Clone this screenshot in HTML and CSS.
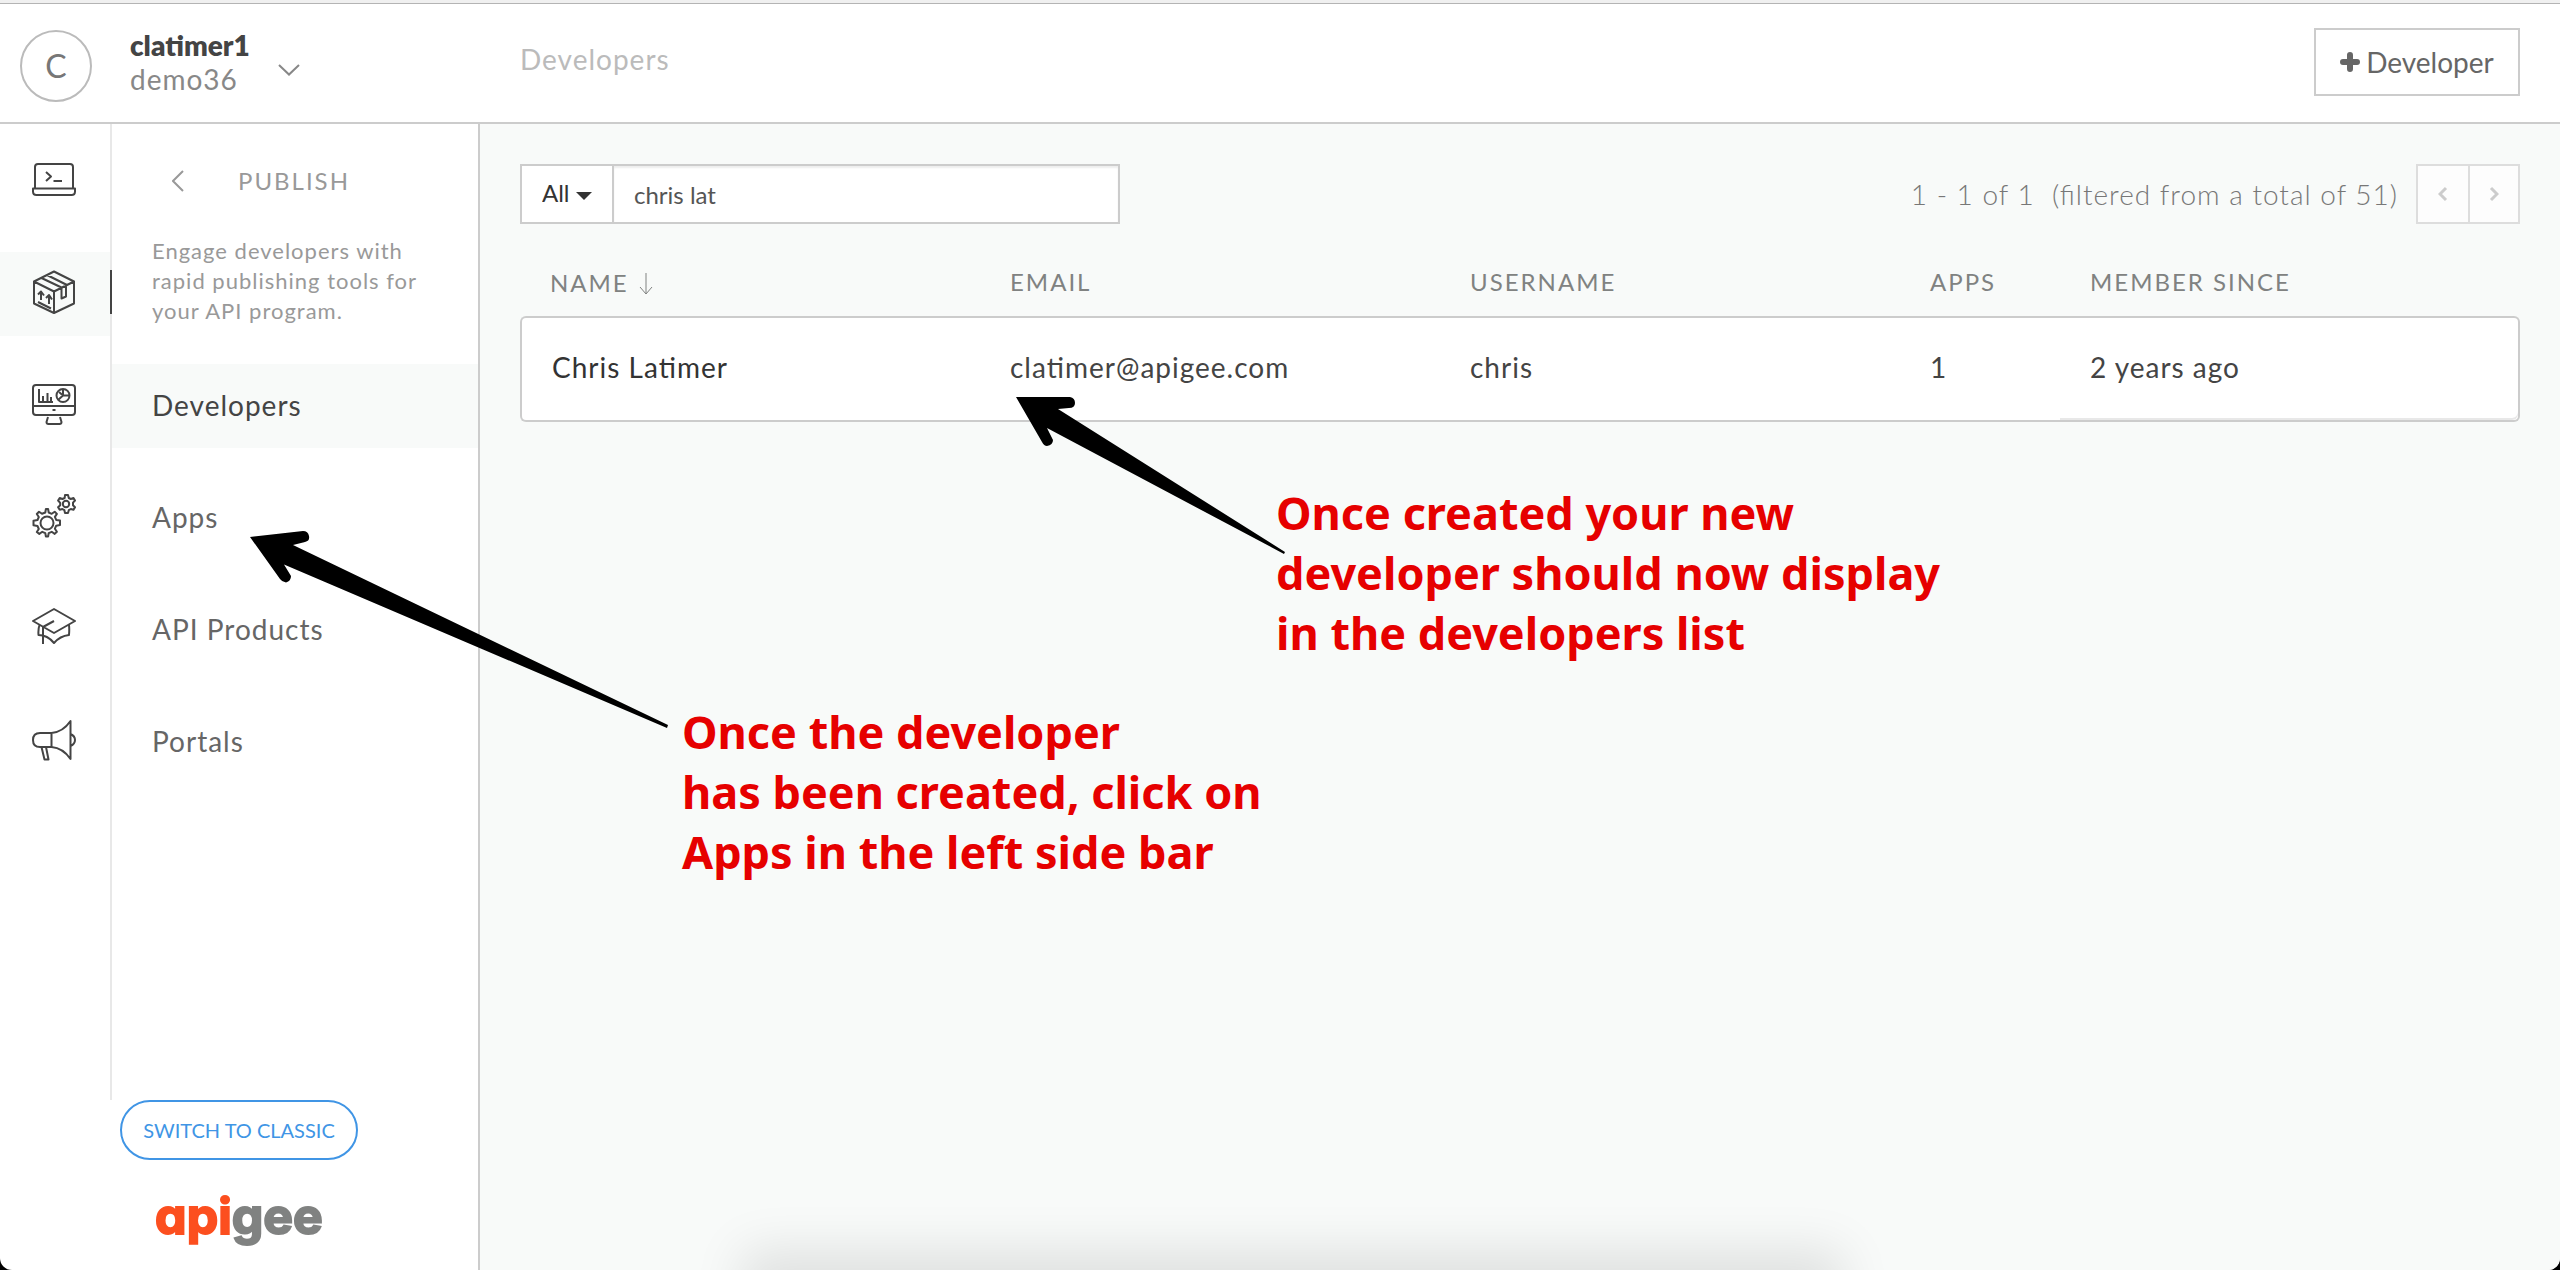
FILE: index.html
```html
<!DOCTYPE html>
<html lang="en">
<head>
<meta charset="utf-8">
<meta name="viewport" content="width=device-width, initial-scale=1">
<title>Developers - apigee</title>
<link rel="stylesheet" href="styles.css">
</head>
<body>
<div class="app">
  <header class="topbar">
    <button class="account" type="button">
      <span class="avatar">C</span>
      <span class="account-names"><strong>clatimer1</strong><span>demo36</span></span>
      <svg class="chevron-down" viewBox="0 0 22 12" width="22" height="12"><path d="M1 1l10 9.500L21 1"/></svg>
    </button>
    <h1 class="page-title tracked">Developers</h1>
    <button class="add-button" type="button">
      <svg viewBox="0 0 20 20" width="20" height="20"><path d="M10 3v14M3 10h14"/></svg>Developer
    </button>
  </header>

  <div class="body">
    <aside class="sidebar">
      <div class="navs">
        <nav class="rail" aria-label="Sections">
          <a href="#" aria-label="Develop">
            <svg viewBox="0 0 44 44"><path d="M3 30V9q0-3 3-3h32q3 0 3 3v21M1 30.500h42v3q0 3.500-3.500 3.500h-35Q1 37 1 33.500zM14 14l5 4.500-5 4.500M21.500 23H30"/></svg>
          </a>
          <a href="#" class="current" aria-label="Publish">
            <svg viewBox="0 0 44 44"><path d="M22 1.500L42 11.500v22L22 43 2 33.500v-22zM2 11.500l20 10 20-10M22 21.500V43M15 5l20 10M9.500 8l20 9.500M29.500 18v10.500l4.500-2V15.500M9 30V21.500M6 24.500l3-3 3 4M17 34V25.500M14 28l3-3 3 4.500M6 32l13 6.500"/></svg>
          </a>
          <a href="#" aria-label="Analyze">
            <svg viewBox="0 0 44 44"><path d="M4 3h36q3 0 3 3v24q0 3-3 3H4q-3 0-3-3V6q0-3 3-3zM1 24h42M20.500 28h3M7 7v13h14M11 19v-5M15.500 19v-8M19 19v-4M16 35l-1.500 5q0 2 2 2h11q2 0 2-2L28 35M31 7v6.500l-5 4.500M31 13.500h6.500M31 13.500l-4-3.500"/><circle cx="31" cy="13.500" r="6.500"/></svg>
          </a>
          <a href="#" aria-label="Admin">
            <svg viewBox="0 0 44 44"><path d="M13.300 18.500l.6-3.500h2.200l.6 3.500 3 1.300 3-2.100 2.200 2.200-2 3 1.300 3 3.800.7v4.500l-3.800.6-1.300 3 2 3-2.200 2.200-3-2.100-3 1.300-.6 3.400h-2.200l-.6-3.400-3-1.300-3 2.100L4.800 38l2-3-1.300-3L1.500 31.300v-4.500l4-.8 1.300-3-2-3L7 17.700l3 2.100z"/><circle cx="15" cy="29" r="6.500"/><path d="M32.700 4l.3-3h3l.8 3 2 1 2.700-1 1.500 2.500-2 2.200v2.500l2 2-1.500 2.600-2.700-.8-2 1.200-.8 2.800h-3l-.6-2.800-2-1.200-2.700.8-1.600-2.500 2.100-2.100V8.800l-2.100-2.300L27.700 4l2.700 1z"/><circle cx="34" cy="10" r="3.200"/></svg>
          </a>
          <a href="#" aria-label="Learn">
            <svg viewBox="0 0 44 44"><path d="M22 3l21 12-21 12L1 15zM22 15l-11 6v17M7.500 19q-1.500 4-1 10 9 0 15.500 8 6-7 15-8 .5-6 0-10"/></svg>
          </a>
          <a href="#" aria-label="News">
            <svg viewBox="0 0 44 44"><path d="M19.500 15H8q-7 0-7 7t7 7h11.500zM19.500 15Q31 14 38.500 3v38Q31 30 19.500 29M38.500 16q4.500 2 4.500 6t-4.500 6M9.500 29l3 12.500h4L14 29"/></svg>
          </a>
        </nav>
        <nav class="panel" aria-label="Publish">
          <div class="panel-head">
            <button class="back" type="button" aria-label="Back"><svg viewBox="0 0 12 22" width="12" height="22"><path d="M11 1L1 11l10 10"/></svg></button>
            <h2>PUBLISH</h2>
          </div>
          <p class="intro">Engage developers with rapid publishing tools for your API program.</p>
          <ul class="tracked">
            <li><a href="#" class="current">Developers</a></li>
            <li><a href="#">Apps</a></li>
            <li><a href="#">API Products</a></li>
            <li><a href="#">Portals</a></li>
          </ul>
        </nav>
      </div>
      <footer class="side-foot">
        <button class="switch" type="button">SWITCH TO CLASSIC</button>
        <a class="logo" href="#"><span>api</span>gee</a>
      </footer>
    </aside>

    <main class="content">
      <div class="toolbar">
        <form class="search">
          <span class="scope">
            <select aria-label="Search field"><option>All</option></select>
            <svg viewBox="0 0 16 8" width="16" height="8"><path d="M0 0h16L8 8z"/></svg>
          </span>
          <input type="text" aria-label="Search developers" value="chris lat">
        </form>
        <div class="paging">
          <span class="count">1 - 1 of 1&nbsp; (filtered from a total of 51)</span>
          <div class="pager">
            <button type="button" aria-label="Previous page"><svg viewBox="0 0 10 16" width="10" height="16"><path d="M8 2L2 8l6 6"/></svg></button>
            <button type="button" aria-label="Next page"><svg viewBox="0 0 10 16" width="10" height="16"><path d="M2 2l6 6-6 6"/></svg></button>
          </div>
        </div>
      </div>

      <table class="developers">
        <thead>
          <tr>
            <th class="wide">NAME <svg viewBox="0 0 14 22" width="14" height="22"><path d="M7 0v21M1 14l6 7 6-7"/></svg></th>
            <th class="wide">EMAIL</th>
            <th class="wide">USERNAME</th>
            <th class="narrow">APPS</th>
            <th>MEMBER SINCE</th>
          </tr>
        </thead>
        <tbody class="tracked">
          <tr>
            <td class="name">Chris Latimer</td>
            <td>clatimer@apigee.com</td>
            <td>chris</td>
            <td>1</td>
            <td>2 years ago</td>
          </tr>
        </tbody>
      </table>
    </main>
  </div>

  <div class="window-shadow"></div>

  <svg class="arrow arrow-apps" viewBox="250 530 420 200" width="420" height="200"><path d="M250 537L303 531Q308 531 309 536T305 542L293 545 668 725 667 728 284 564.500 291 576Q291 581 286 582.500 282 582 280 579z"/></svg>
  <p class="note note-apps">Once the developer<br>has been created, click on<br>Apps in the left side bar</p>
  <svg class="arrow arrow-list" viewBox="1016 396 270 160" width="270" height="160"><path d="M1016 397H1070Q1075 398 1075 403T1069 408L1058 409 1285 552 1284 554 1047 428 1053 440Q1053 445 1047 446 1044 446 1042 442z"/></svg>
  <p class="note note-list">Once created your new<br>developer should now display<br>in the developers list</p>
</div>
</body>
</html>
```

FILE: styles.css
```css
* {
  box-sizing: border-box;
}

html {
  background: #000;
}

body {
  margin: 0;
  font: 28px/34px Lato, "Open Sans", sans-serif;
  color: #444;
}

button,
input,
select {
  font: inherit;
  color: inherit;
}

button {
  padding: 0;
  border: 0;
  background: none;
  cursor: pointer;
}

h1, h2, p, ul {
  margin: 0;
  padding: 0;
  font-weight: 400;
}

a {
  color: inherit;
  text-decoration: none;
}

svg {
  fill: none;
  stroke: currentColor;
  stroke-width: 2;
}

.tracked {
  letter-spacing: 1px;
  font-feature-settings: "liga" 1;
}

.app {
  position: relative;
  display: flex;
  flex-direction: column;
  min-height: 100vh;
  overflow: hidden;
  border-top: 3px solid #f0f0f0;
  border-radius: 0 0 12px 12px;
  background: #fff;
}

/* Top bar */
.topbar {
  display: flex;
  align-items: flex-start;
  min-height: 121px;
  padding: 0 40px 0 20px;
  border-top: 1px solid #b4b4b4;
  border-bottom: 2px solid #ccc;
}

.account {
  display: flex;
  align-items: center;
  width: 500px;
  padding-top: 24px;
  text-align: left;
}

.avatar {
  display: grid;
  place-items: center;
  width: 72px;
  height: 72px;
  margin: 2px 38px 0 0;
  border: 2px solid #bbb;
  border-radius: 50%;
  font-size: 32px;
  color: #777;
}

.account-names {
  display: grid;
  padding-bottom: 6px;
}

.account-names strong {
  font-weight: 800;
}

.account-names span {
  color: #888;
  letter-spacing: 1px;
}

.chevron-down {
  margin: 10px 0 0 28px;
  color: #888;
}

.page-title {
  flex: 1;
  margin-top: 38px;
  font-size: 28px;
  color: #bbb;
}

.add-button {
  display: flex;
  align-items: center;
  justify-content: center;
  gap: 6px;
  width: 206px;
  height: 68px;
  margin-top: 24px;
  border: 2px solid #ccc;
  color: #666;
}

.add-button svg {
  stroke-width: 6;
  stroke-linecap: round;
}

/* Sidebar */
.body {
  display: flex;
  flex: 1;
}

.sidebar {
  display: flex;
  flex-direction: column;
  width: 480px;
  border-right: 2px solid #ccc;
}

.navs {
  display: flex;
  flex: 1;
}

.rail {
  display: flex;
  flex-direction: column;
  gap: 28px;
  width: 112px;
  padding-top: 16px;
  border-right: 2px solid #e8e8e8;
}

.rail a {
  position: relative;
  display: flex;
  align-items: center;
  height: 84px;
  padding: 0 0 4px 32px;
}

.rail svg {
  width: 44px;
  height: 44px;
  stroke-linejoin: round;
}

.rail .current,
.panel .current {
  background: #f8faf9;
  color: #444;
}

.rail .current::after {
  content: "";
  position: absolute;
  top: 18px;
  right: -2px;
  width: 2px;
  height: 44px;
  background: #444;
}

.panel {
  flex: 1;
  color: #666;
}

.panel-head {
  display: flex;
  align-items: center;
  gap: 54px;
  padding: 40px 60px 0;
  color: #999;
}

.back {
  display: flex;
}

.panel h2 {
  font-size: 24px;
  letter-spacing: 2px;
}

.intro {
  padding: 38px 40px;
  font-size: 22px;
  line-height: 30px;
  letter-spacing: 1px;
  color: #999;
}

.panel ul {
  display: grid;
  gap: 28px;
  list-style: none;
}

.panel li a {
  display: block;
  padding: 24px 40px 26px;
}

.side-foot {
  display: flex;
  flex-direction: column;
  align-items: center;
  gap: 26px;
  height: 170px;
}

.switch {
  width: 238px;
  height: 60px;
  border: 2px solid #4095e5;
  border-radius: 30px;
  font-size: 20px;
  color: #4095e5;
}

.logo {
  font: 700 50px/60px Inter, Lato, sans-serif;
  font-feature-settings: "cv11" 1;
  -webkit-text-stroke: 2px;
  color: #808281;
}

.logo span {
  color: #fc4f1f;
}

/* Main area */
.content {
  flex: 1;
  padding: 40px;
  background: #f8faf9;
}

.toolbar {
  display: flex;
  justify-content: space-between;
  height: 60px;
}

.search {
  display: flex;
  width: 600px;
  border: 2px solid #ccc;
  background: #fff;
  font-size: 24px;
}

.scope {
  position: relative;
  width: 92px;
  border-right: 2px solid #ccc;
  color: #333;
}

.scope select {
  width: 100%;
  height: 100%;
  padding: 0 20px 2px;
  border: 0;
  background: none;
  appearance: none;
}

.scope svg {
  position: absolute;
  top: 26px;
  right: 20px;
  fill: currentColor;
  stroke: none;
  pointer-events: none;
}

.search input {
  flex: 1;
  min-width: 0;
  padding: 2px 20px 0;
  border: 0;
  background: none;
  box-shadow: inset 0 2px 2px #eee;
  color: #555;
}

.paging {
  display: flex;
  align-items: center;
  gap: 18px;
}

.count {
  font-weight: 300;
  letter-spacing: 1px;
  font-feature-settings: "liga" 1;
  color: #777;
}

.pager {
  display: flex;
  height: 60px;
  border: 2px solid #ddd;
  background: #fdfdfd;
  color: #ccc;
}

.pager button {
  display: grid;
  place-items: center;
  width: 50px;
}

.pager button + button {
  border-left: 2px solid #ddd;
}

.pager svg {
  stroke-width: 3;
}

.developers {
  width: 100%;
  margin-top: 40px;
  border-spacing: 0;
  table-layout: fixed;
}

.developers th {
  height: 52px;
  padding: 0 0 16px 30px;
  font-size: 24px;
  font-weight: 400;
  letter-spacing: 2px;
  text-align: left;
  color: #808281;
}

.developers th:first-child {
  padding-bottom: 14px;
}

.developers th svg {
  margin-left: 2px;
  vertical-align: -3px;
  stroke-width: 1;
}

.wide {
  width: 23%;
}

.narrow {
  width: 8%;
}

.developers td {
  height: 106px;
  padding: 0 0 4px 30px;
  border: solid #ccc;
  border-width: 2px 0;
  background: #fff;
}

.developers td:first-child {
  border-left-width: 2px;
  border-radius: 6px 0 0 6px;
}

.developers td:last-child {
  border-right-width: 2px;
  border-radius: 0 6px 6px 0;
  box-shadow: inset 0 -2px #e8e8e8;
}

.developers .name {
  color: #333;
}

/* Shade cast by the window edge */
.window-shadow {
  position: absolute;
  top: 100%;
  left: 29%;
  width: 43%;
  height: 80px;
  box-shadow: 0 -20px 50px rgb(0 0 0 / 10%);
}

/* Tutorial callouts */
.arrow {
  position: absolute;
  fill: #000;
  stroke: none;
}

.arrow-apps {
  top: 527px;
  left: 250px;
}

.arrow-list {
  top: 393px;
  left: 1016px;
}

.note {
  position: absolute;
  font: 700 45px/60px "Noto Sans", "Open Sans", sans-serif;
  color: #e60000;
  white-space: nowrap;
}

.note-apps {
  top: 699px;
  left: 682px;
}

.note-list {
  top: 480px;
  left: 1276px;
}
```
